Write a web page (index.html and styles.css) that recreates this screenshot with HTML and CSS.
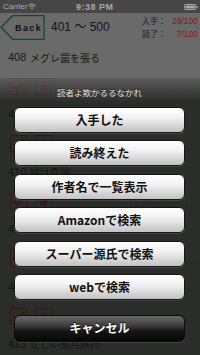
FILE: index.html
```html
<!DOCTYPE html>
<html lang="ja">
<head>
<meta charset="utf-8">
<title>401 〜 500</title>
<link rel="stylesheet" href="styles.css">
</head>
<body>
<div class="screen">
  <div class="status">
    <span class="carrier">Carrier</span>
    <svg class="wifi" width="8" height="7" viewBox="0 0 16 14">
      <path d="M1 5.2 Q8 -1.2 15 5.2" stroke="#a8a8a8" stroke-width="2.2" fill="none"/>
      <path d="M3.9 8.3 Q8 4.6 12.1 8.3" stroke="#a8a8a8" stroke-width="2.2" fill="none"/>
      <path d="M8 13.2 L5.9 11 Q8 9.2 10.1 11 Z" fill="#a8a8a8"/>
    </svg>
    <span class="time">9:38 PM</span>
    <svg class="battery" width="14" height="6" viewBox="0 0 14 6">
      <rect x="0.5" y="0.5" width="11.5" height="5" rx="1" fill="none" stroke="#a8a8a8"/>
      <rect x="1.6" y="1.6" width="9.3" height="2.8" fill="#a8a8a8"/>
      <rect x="12.4" y="2" width="1.2" height="2" fill="#a8a8a8"/>
    </svg>
  </div>

  <div class="nav">
    <a class="back">
      <svg width="45" height="25" viewBox="0 0 45 25">
        <path d="M1 12.3 L12.8 0.7 L44 0.7 L44 24.3 L12.8 24.3 Z" fill="none" stroke="#114a2c" stroke-width="1.3"/>
      </svg>
      <span>Back</span>
    </a>
    <div class="range">401 〜 500</div>
    <div class="counts">
      <span class="label">入手：</span><span class="value">29/100</span>
      <span class="label">読了：</span><span class="value">7/100</span>
    </div>
  </div>

  <ul class="list">
    <li class="item">
      <div class="row"><span class="num">408</span><span class="name">メグレ罠を張る</span></div>
      <div class="meta">
        <span class="box"><svg width="15" height="15" viewBox="0 0 15 15"><path d="M2.5 7.5 L6 11.5 L12.8 2.8" stroke="#9a2222" stroke-width="2.3" fill="none"/></svg></span>
        <span class="box"><svg width="15" height="15" viewBox="0 0 15 15"><path d="M7.5 1.8 L9 5.9 L13.3 6 L9.9 8.6 L11.1 12.8 L7.5 10.3 L3.9 12.8 L5.1 8.6 L1.7 6 L6 5.9 Z" fill="#9a2222"/></svg></span>
        <span class="author">ジョルジュ・シムノン</span>
      </div>
    </li>
    <li class="item">
      <div class="row"><span class="num">409</span></div>
      <div class="meta">
        <span class="box"><svg width="15" height="15" viewBox="0 0 15 15"><path d="M2.5 7.5 L6 11.5 L12.8 2.8" stroke="#9a2222" stroke-width="2.3" fill="none"/></svg></span>
        <span class="box"><svg width="15" height="15" viewBox="0 0 15 15"><path d="M7.5 1.8 L9 5.9 L13.3 6 L9.9 8.6 L11.1 12.8 L7.5 10.3 L3.9 12.8 L5.1 8.6 L1.7 6 L6 5.9 Z" fill="#9a2222"/></svg></span>
        <span class="author">ン</span>
      </div>
    </li>
    <li class="item">
      <div class="row"><span class="num">410</span><span class="name">緑は危険</span></div>
      <div class="meta">
        <span class="box"><svg width="15" height="15" viewBox="0 0 15 15"><path d="M2.5 7.5 L6 11.5 L12.8 2.8" stroke="#9a2222" stroke-width="2.3" fill="none"/></svg></span>
        <span class="box"><svg width="15" height="15" viewBox="0 0 15 15"><path d="M7.5 1.8 L9 5.9 L13.3 6 L9.9 8.6 L11.1 12.8 L7.5 10.3 L3.9 12.8 L5.1 8.6 L1.7 6 L6 5.9 Z" fill="#9a2222"/></svg></span>
        <span class="author">クリスチアナ・ブランド</span>
      </div>
    </li>
    <li class="item">
      <div class="row"><span class="num">411</span></div>
      <div class="meta">
        <span class="box"><svg width="15" height="15" viewBox="0 0 15 15"><path d="M2.5 7.5 L6 11.5 L12.8 2.8" stroke="#9a2222" stroke-width="2.3" fill="none"/></svg></span>
        <span class="box"><svg width="15" height="15" viewBox="0 0 15 15"><path d="M7.5 1.8 L9 5.9 L13.3 6 L9.9 8.6 L11.1 12.8 L7.5 10.3 L3.9 12.8 L5.1 8.6 L1.7 6 L6 5.9 Z" fill="#9a2222"/></svg></span>
        <span class="author">ッ</span>
      </div>
    </li>
    <li class="item">
      <div class="row"><span class="num">412</span></div>
      <div class="meta">
        <span class="box"><svg width="15" height="15" viewBox="0 0 15 15"><path d="M2.5 7.5 L6 11.5 L12.8 2.8" stroke="#9a2222" stroke-width="2.3" fill="none"/></svg></span>
        <span class="box"><svg width="15" height="15" viewBox="0 0 15 15"><path d="M7.5 1.8 L9 5.9 L13.3 6 L9.9 8.6 L11.1 12.8 L7.5 10.3 L3.9 12.8 L5.1 8.6 L1.7 6 L6 5.9 Z" fill="#9a2222"/></svg></span>
        <span class="author">カーター・ディクスン</span>
      </div>
    </li>
    <li class="item">
      <div class="row"><span class="num">413</span><span class="name">忙しい蜜月旅行</span></div>
    </li>
  </ul>

  <div class="sheet">
    <div class="sheet-title">読者よ欺かるるなかれ</div>
    <div class="actions">
      <button class="btn">入手した</button>
      <button class="btn">読み終えた</button>
      <button class="btn">作者名で一覧表示</button>
      <button class="btn">Amazonで検索</button>
      <button class="btn">スーパー源氏で検索</button>
      <button class="btn">webで検索</button>
    </div>
    <button class="btn cancel">キャンセル</button>
  </div>
</div>
</body>
</html>
```

FILE: styles.css
```css
* {
  box-sizing: border-box;
  margin: 0;
  padding: 0;
}

html {
  background: #6a6a6a;
}

body {
  width: 200px;
  height: 355px;
  overflow: hidden;
  font-family: "Liberation Sans", "Noto Sans CJK JP", sans-serif;
}

.screen {
  position: relative;
  width: 200px;
  height: 355px;
  overflow: hidden;
  background-color: #6a6a6a;
}

/* status bar */
.status {
  height: 13px;
  display: flex;
  align-items: center;
  padding: 0 2px 0 3px;
  background-color: #464646;
  color: #a8a8a8;
  font-size: 8px;
}

.carrier {
  width: 25px;
}

.time {
  margin-left: 40px;
  font-size: 9px;
  font-weight: bold;
  letter-spacing: 0.5px;
}

.battery {
  margin-left: auto;
}

/* navigation */
.nav {
  height: 31px;
  display: flex;
  align-items: flex-start;
  padding-top: 1px;
  background-color: #6a6a6a;
}

.back {
  position: relative;
  width: 45px;
  height: 25px;
  margin-top: 1px;
  display: flex;
  align-items: center;
}

.back svg {
  position: absolute;
  left: 0;
  top: 0;
}

.back span {
  position: relative;
  margin-left: 15px;
  font-size: 9px;
  font-weight: bold;
  letter-spacing: 1.4px;
  color: #111;
}

.range {
  margin-left: 6px;
  font-size: 12px;
  line-height: 26px;
  color: #141414;
}

.counts {
  margin-left: auto;
  padding-right: 2px;
  display: grid;
  grid-template-columns: 26px 30px;
  grid-auto-rows: 13px;
  align-items: center;
}

.label {
  font-family: "Noto Sans CJK JP", sans-serif;
  font-size: 8px;
  color: #1c1c1c;
}

.value {
  text-align: right;
  font-size: 8.5px;
  color: #861818;
}

/* list */
.list {
  list-style: none;
  background-color: #6a6a6a;
}

.item {
  height: 57.4px;
}

.row {
  height: 26px;
  display: flex;
  align-items: center;
  color: #181818;
}

.num {
  width: 30px;
  padding-left: 8px;
  font-size: 11px;
}

.name {
  font-family: "Noto Sans CJK JP", sans-serif;
  font-size: 10px;
}

.meta {
  display: flex;
  gap: 8px;
  padding: 8px 4px 0 10px;
}

.box {
  width: 17px;
  height: 17px;
  border: 1px solid #8e2020;
  display: flex;
  align-items: center;
  justify-content: center;
}

.author {
  margin-left: auto;
  margin-top: 6px;
  font-family: "Noto Sans CJK JP", sans-serif;
  font-size: 7px;
  line-height: 10px;
  color: #4a4a4a;
}

/* action sheet */
.sheet {
  position: absolute;
  top: 78px;
  left: 0;
  right: 0;
  bottom: 0;
  display: flex;
  flex-direction: column;
  padding: 9px 15px 0 14px;
  background-color: rgba(18, 22, 18, 0.72);
  background-image: linear-gradient(rgba(106, 106, 106, 0.75), rgba(106, 106, 106, 0) 24px);
}

.sheet-title {
  height: 10px;
  line-height: 10px;
  margin-bottom: 10px;
  text-align: center;
  font-family: "Noto Sans CJK JP", sans-serif;
  font-size: 8.5px;
  color: #e4e4e4;
  text-shadow: 0 -1px 0 rgba(0, 0, 0, 0.6);
}

.actions {
  display: flex;
  flex-direction: column;
  gap: 7.4px;
}

.btn {
  height: 26px;
  border: 1px solid #161616;
  border-radius: 6px;
  background-color: #e6e6e6;
  background-image: linear-gradient(#ffffff 0%, #f4f4f4 35%, #e2e2e2 60%, #c2c2c2 100%);
  box-shadow: 0 1px 0 rgba(255, 255, 255, 0.12);
  font-family: "Noto Sans CJK JP", sans-serif;
  font-size: 12px;
  font-weight: bold;
  color: #111;
  line-height: 1;
}

.cancel {
  height: 27px;
  margin-top: 15px;
  background-color: #222;
  background-image: linear-gradient(#6a6a6a 0%, #3c3c3c 40%, #161616 60%, #060606 100%);
  border-color: #0a0a0a;
  color: #fff;
  text-shadow: 0 -1px 0 #000;
}
```
